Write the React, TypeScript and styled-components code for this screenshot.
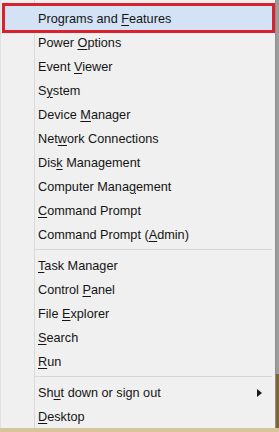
import React from "react";
import styled, { createGlobalStyle } from "styled-components";

const Global = createGlobalStyle`
  html, body { margin: 0; padding: 0; }
  body {
    width: 279px;
    height: 432px;
    overflow: hidden;
    font-family: "Liberation Sans", Arial, sans-serif;
  }
`;

const Desktop = styled.div`
  width: 279px;
  height: 432px;
  background:
    linear-gradient(to bottom, transparent 0, transparent 428px, #d6c59c 428px),
    linear-gradient(to bottom, #9c9c9c 0, #9c9c9c 374px, #7d6535 374px);
`;

const Menu = styled.div`
  position: relative;
  width: 276px;
  height: 428px;
  box-sizing: border-box;
  background: #f0f0f0;
  border-right: 1px solid #8e8e8e;
  border-left: 1px solid #e2e2e2;
  padding: 6px 3px 0 4px;
  display: flex;
  flex-direction: column;
`;

const Gutter = styled.div`
  position: absolute;
  left: 33px;
  top: 0;
  bottom: 0;
  width: 1px;
  background: #dadada;
`;

const Item = styled.div<{ $active?: boolean }>`
  position: relative;
  height: 24px;
  flex: none;
  box-sizing: border-box;
  display: flex;
  align-items: center;
  padding-left: 33px;
  padding-top: 1px;
  font-size: 12.7px;
  color: #141414;
  white-space: nowrap;
  background: ${(p) => (p.$active ? "#d3e3f5" : "transparent")};
  outline: ${(p) => (p.$active ? "3px solid #d8232f" : "none")};
  u {
    text-decoration: underline;
    text-underline-offset: 2px;
    text-decoration-thickness: 1px;
  }
`;

const Label = styled.span`
  flex: 1;
`;

const Arrow = styled.span`
  width: 0;
  height: 0;
  border-top: 4px solid transparent;
  border-bottom: 4px solid transparent;
  border-left: 5px solid #1a1a1a;
  margin-right: 10px;
`;

const Separator = styled.div`
  height: 7px;
  flex: none;
  margin-left: 30px;
  display: flex;
  align-items: center;
  &::after {
    content: "";
    display: block;
    width: 100%;
    height: 1px;
    background: #d7d7d7;
  }
`;

type Entry = { pre: string; key: string; post: string; active?: boolean; sub?: boolean } | "sep";

const entries: Entry[] = [
  { pre: "Programs and ", key: "F", post: "eatures", active: true },
  { pre: "Power ", key: "O", post: "ptions" },
  { pre: "Event ", key: "V", post: "iewer" },
  { pre: "S", key: "y", post: "stem" },
  { pre: "Device ", key: "M", post: "anager" },
  { pre: "Net", key: "w", post: "ork Connections" },
  { pre: "Dis", key: "k", post: " Management" },
  { pre: "Computer Mana", key: "g", post: "ement" },
  { pre: "", key: "C", post: "ommand Prompt" },
  { pre: "Command Prompt (", key: "A", post: "dmin)" },
  "sep",
  { pre: "", key: "T", post: "ask Manager" },
  { pre: "Control ", key: "P", post: "anel" },
  { pre: "File ", key: "E", post: "xplorer" },
  { pre: "", key: "S", post: "earch" },
  { pre: "", key: "R", post: "un" },
  "sep",
  { pre: "Sh", key: "u", post: "t down or sign out", sub: true },
  { pre: "", key: "D", post: "esktop" },
];

export default function App() {
  return (
    <>
      <Global />
      <Desktop>
        <Menu>
          <Gutter />
          {entries.map((e, i) =>
            e === "sep" ? (
              <Separator key={i} />
            ) : (
              <Item key={i} $active={e.active}>
                <Label>
                  {e.pre}
                  <u>{e.key}</u>
                  {e.post}
                </Label>
                {e.sub && <Arrow />}
              </Item>
            )
          )}
        </Menu>
      </Desktop>
    </>
  );
}
